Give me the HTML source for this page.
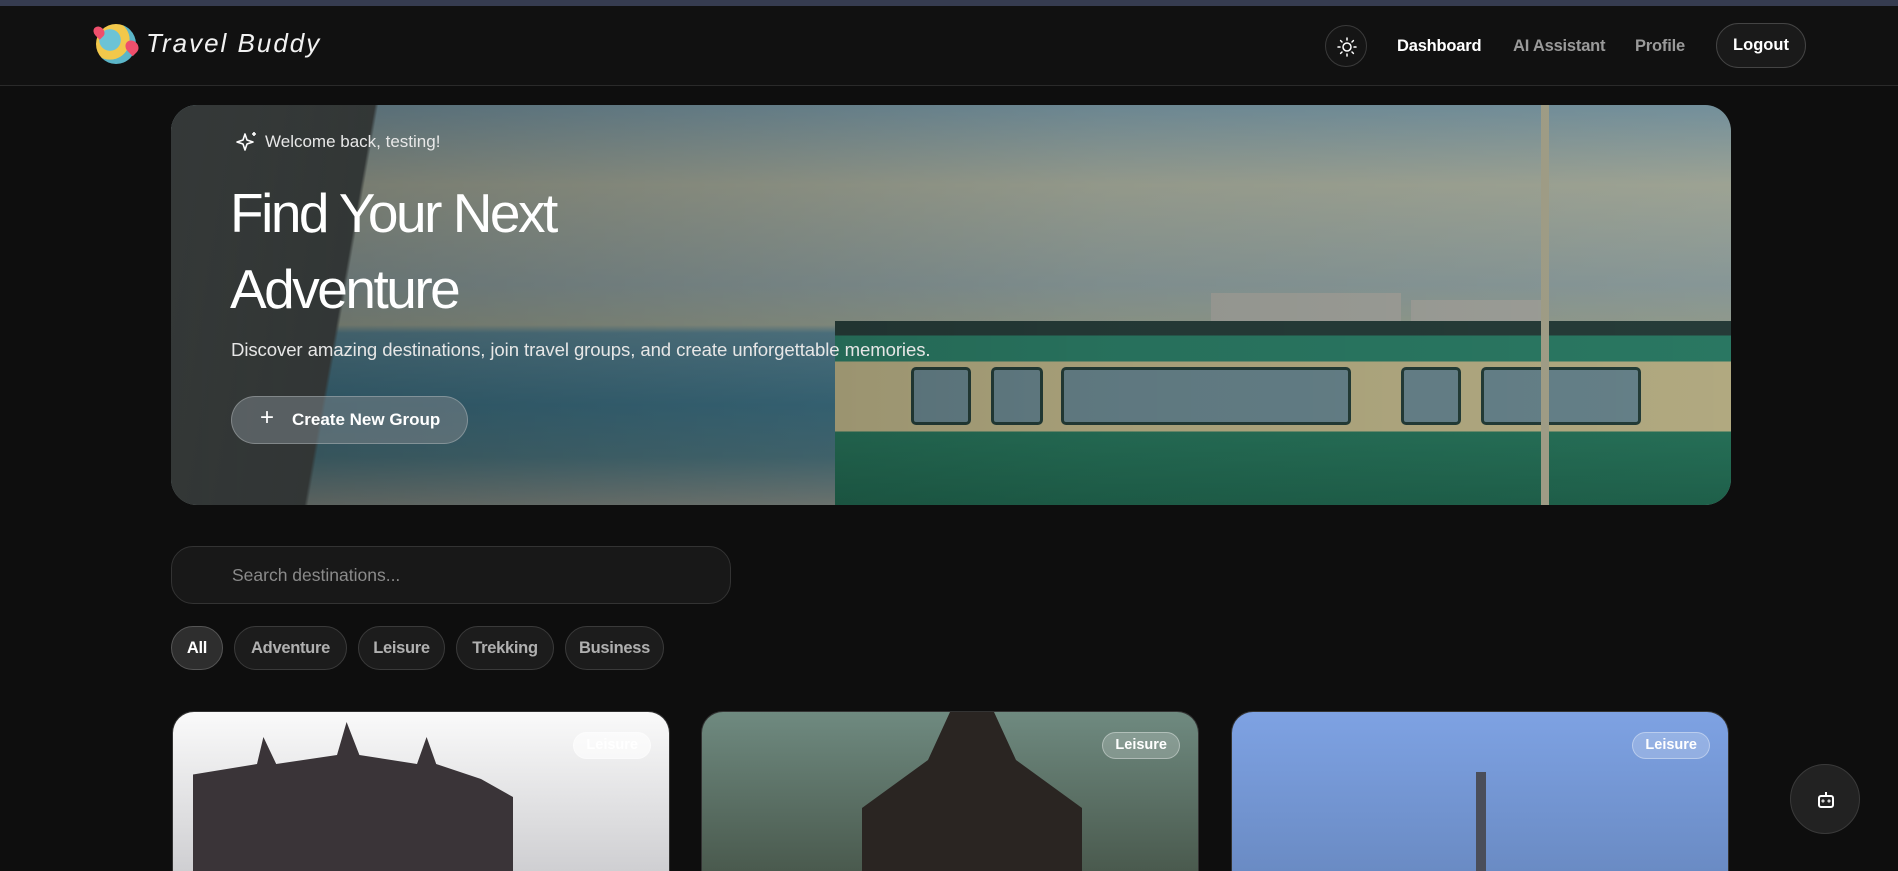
<!DOCTYPE html>
<html><head><meta charset="utf-8"><style>
*{box-sizing:border-box;margin:0;padding:0}
html,body{width:1898px;height:871px;overflow:hidden}
body{background:#0e0e0e;font-family:"Segoe UI","Liberation Sans",sans-serif;color:#fff;position:relative}
.topstrip{position:absolute;left:0;top:0;width:1898px;height:6px;background:#363c50}
.header{position:absolute;left:0;top:6px;width:1898px;height:80px;background:#111;border-bottom:1px solid #2a2a2a}
.logo{position:absolute;left:96px;top:18px;width:40px;height:40px;border-radius:50%;background:radial-gradient(circle at 35% 40%,#6cc3d6 0 30%,#f2c84b 31% 55%,#5bb6c9 56%)}
.logo:before{content:"";position:absolute;left:-2px;top:2px;width:10px;height:12px;border-radius:50% 50% 50% 0;background:#ef4f6c;transform:rotate(-45deg)}
.logo:after{content:"";position:absolute;right:-2px;top:16px;width:12px;height:14px;border-radius:50% 50% 50% 0;background:#ef4f6c;transform:rotate(-45deg)}
.brand{position:absolute;left:146px;top:22px;font-size:26px;font-style:italic;font-weight:300;letter-spacing:2px;color:#f2f2f2}
.sun{position:absolute;left:1325px;top:19px;width:42px;height:42px;border-radius:50%;border:1px solid #3a3a3a;background:#151515}
.nav{position:absolute;top:31px;font-size:16.5px;font-weight:700;letter-spacing:-.2px}
.logout{position:absolute;left:1716px;top:17px;width:90px;height:45px;border-radius:23px;border:1px solid #444;background:#1a1a1a;font-size:16.5px;font-weight:700;text-align:center;line-height:43px}
.hero{position:absolute;left:171px;top:105px;width:1560px;height:400px;border-radius:26px;overflow:hidden;
background:linear-gradient(180deg,#8fb3c2 0%,#c4cbb8 20%,#a8bcbc 45%,#b3bfae 55%,#6a9cae 57%,#4a889f 75%,#5a8b97 88%,#97a29c 100%)}
.hero .wall{position:absolute;left:0;top:0;width:300px;height:400px;background:linear-gradient(100deg,#5a6160 0%,#525958 55%,transparent 56%)}
.hero .train{position:absolute;left:664px;top:216px;width:900px;height:184px;background:linear-gradient(180deg,#2f4a46 0,#2f4a46 8%,#34957a 8%,#34957a 22%,#ddd3a0 22%,#ddd3a0 60%,#2f8a6c 60%,#26775c 100%)}
.hero .win{position:absolute;top:262px;height:58px;background:#7ea0aa;border:3px solid #2c4a44;border-radius:5px}
.hero .box{position:absolute;background:#c3c5bd}
.hero .overlay{position:absolute;inset:0;background:linear-gradient(90deg,rgba(0,0,0,.42),rgba(0,0,0,.25) 60%,rgba(0,0,0,.2))}
.welcome{position:absolute;left:94px;top:27px;font-size:17px;font-weight:300;color:#e8e8e8}
.h1{position:absolute;left:59px;top:70px;font-size:55px;font-weight:300;line-height:76px;letter-spacing:-2.5px}
.sub{position:absolute;left:60px;top:234px;font-size:18.6px;font-weight:300;color:#e6e6e6;letter-spacing:-.1px}
.btn{position:absolute;left:60px;top:291px;width:237px;height:48px;border-radius:24px;background:rgba(120,130,135,.55);border:1px solid rgba(255,255,255,.25);font-size:17px;font-weight:600;line-height:46px;padding-left:30px}
.search{position:absolute;left:171px;top:546px;width:560px;height:58px;border-radius:22px;background:#181818;border:1px solid #333;font-size:17.5px;color:#8a8a8a;line-height:56px;padding-left:60px}
.chip{position:absolute;top:626px;height:44px;border-radius:22px;background:#1c1c1c;border:1px solid #3a3a3a;font-size:16.5px;font-weight:600;color:#b0b0b0;line-height:42px;text-align:center;letter-spacing:-.3px}
.card{position:absolute;top:711px;width:498px;height:160px;border-radius:22px 22px 0 0;overflow:hidden;border:1px solid #333;border-bottom:0}
.badge{position:absolute;right:18px;top:20px;height:27px;padding:0 12px;border-radius:14px;background:rgba(255,255,255,.2);border:1px solid rgba(255,255,255,.35);font-size:14.5px;font-weight:600;line-height:25px}
.fab{position:absolute;left:1790px;top:764px;width:70px;height:70px;border-radius:50%;background:#222;border:1px solid #3a3a3a}
</style></head><body>
<div class="topstrip"></div>
<div class="header">
<div class="logo"></div>
<div class="brand">Travel Buddy</div>
<div class="sun"><svg width="42" height="42" viewBox="0 0 42 42"><g stroke="#fff" stroke-width="1.5" fill="none" stroke-linecap="round"><circle cx="21" cy="21" r="4"/><path d="M21 12v2M21 28v2M12 21h2M28 21h2M14.6 14.6l1.4 1.4M26 26l1.4 1.4M14.6 27.4l1.4-1.4M26 16l1.4-1.4"/></g></svg></div>
<div class="nav" style="left:1397px;color:#fff">Dashboard</div>
<div class="nav" style="left:1513px;color:#9a9a9a">AI Assistant</div>
<div class="nav" style="left:1635px;color:#9a9a9a">Profile</div>
<div class="logout">Logout</div>
</div>
<div class="hero">
<div class="wall"></div>
<div class="box" style="left:1040px;top:188px;width:190px;height:32px"></div>
<div class="box" style="left:1240px;top:195px;width:130px;height:26px"></div>
<div class="train"></div>
<div class="win" style="left:740px;width:60px"></div>
<div class="win" style="left:820px;width:52px"></div>
<div class="win" style="left:890px;width:290px"></div>
<div class="win" style="left:1230px;width:60px"></div>
<div class="win" style="left:1310px;width:160px"></div>
<div style="position:absolute;left:1370px;top:0;width:8px;height:400px;background:#c9c6a9"></div>
<div class="overlay"></div>
<div class="welcome"><svg style="position:absolute;left:-30px;top:-2px" width="24" height="24" viewBox="0 0 24 24" fill="none" stroke="#fff" stroke-width="1.6" stroke-linejoin="round"><path d="M10 4l2 6 6 2-6 2-2 6-2-6-6-2 6-2z"/><path d="M19 2v4M17 4h4"/></svg>Welcome back, testing!</div>
<div class="h1">Find Your Next<br>Adventure</div>
<div class="sub">Discover amazing destinations, join travel groups, and create unforgettable memories.</div>
<div class="btn"><span style="font-weight:300;font-size:24px;position:absolute;left:28px;top:-2px">+</span><span style="margin-left:30px">Create New Group</span></div>
</div>
<div class="search">Search destinations...</div>
<div class="chip" style="left:171px;width:52px;background:#2e2e2e;color:#fff;border-color:#555">All</div>
<div class="chip" style="left:234px;width:113px">Adventure</div>
<div class="chip" style="left:358px;width:87px">Leisure</div>
<div class="chip" style="left:456px;width:98px">Trekking</div>
<div class="chip" style="left:565px;width:99px">Business</div>
<div class="card" style="left:172px;background:linear-gradient(180deg,#fafafa,#cfcfd2)">
<div style="position:absolute;left:20px;top:10px;width:320px;height:150px;background:#3a3438;clip-path:polygon(0 35%,20% 28%,22% 10%,26% 28%,45% 22%,48% 0,52% 22%,70% 28%,73% 10%,76% 28%,90% 38%,100% 50%,100% 100%,0 100%)"></div>
<div class="badge" style="background:rgba(255,255,255,.6)">Leisure</div></div>
<div class="card" style="left:701px;background:linear-gradient(180deg,#6f8a80,#4a5a4e)">
<div style="position:absolute;left:160px;top:0;width:220px;height:160px;background:#2a2522;clip-path:polygon(40% 0,60% 0,70% 30%,100% 60%,100% 100%,0 100%,0 60%,30% 30%)"></div>
<div class="badge">Leisure</div></div>
<div class="card" style="left:1231px;background:linear-gradient(180deg,#7ea2e3,#6a8bc4)">
<div style="position:absolute;left:244px;top:60px;width:10px;height:100px;background:#4a4e5a"></div>
<div class="badge">Leisure</div></div>
<div class="fab"><svg width="70" height="70" viewBox="0 0 70 70" fill="none" stroke="#fff" stroke-width="2"><rect x="28" y="31" width="14" height="11" rx="2"/><path d="M35 31v-4"/><circle cx="32" cy="36" r=".5"/><circle cx="38" cy="36" r=".5"/></svg></div>
</body></html>
